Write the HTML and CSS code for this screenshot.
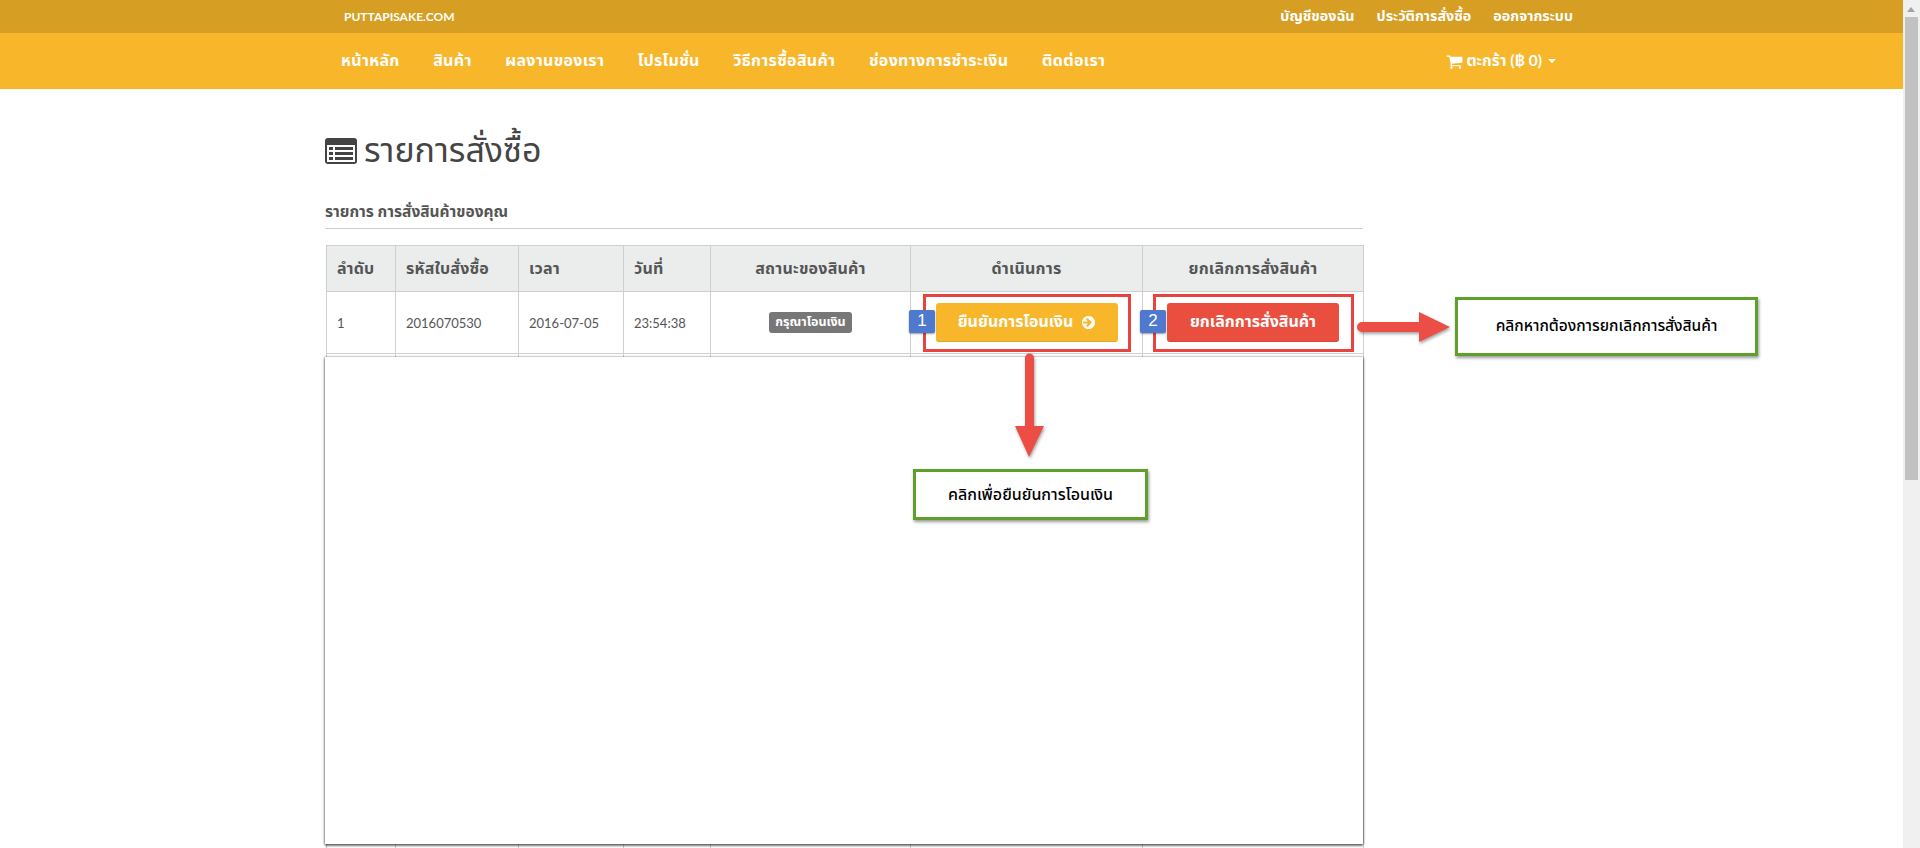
FILE: index.html
```html
<!DOCTYPE html>
<html lang="th">
<head>
  <meta charset="UTF-8" />
  <title>รายการสั่งซื้อ</title>
  <link rel="stylesheet" href="styles.css">
</head>
<body>
  <div class="page">
    <div class="main">
      <div class="topbar">
        <div class="brand">PUTTAPISAKE.COM</div>
        <ul class="toplinks">
          <li>บัญชีของฉัน</li>
          <li>ประวัติการสั่งซื้อ</li>
          <li>ออกจากระบบ</li>
        </ul>
      </div>

      <div class="navbar">
        <ul class="navlinks">
          <li>หน้าหลัก</li>
          <li>สินค้า</li>
          <li>ผลงานของเรา</li>
          <li>โปรโมชั่น</li>
          <li>วิธีการซื้อสินค้า</li>
          <li>ช่องทางการชำระเงิน</li>
          <li>ติดต่อเรา</li>
        </ul>
        <div class="cart">
          <svg class="cart-icon" viewBox="0 0 1792 1792"><path fill="#fff" d="M704 1536q0 52-38 90t-90 38-90-38-38-90 38-90 90-38 90 38 38 90zm896 0q0 52-38 90t-90 38-90-38-38-90 38-90 90-38 90 38 38 90zm128-1088v512q0 24-16.5 42.5t-40.5 21.5l-1044 122q13 60 13 70 0 16-24 64h920q26 0 45 19t19 45-19 45-45 19h-1024q-26 0-45-19t-19-45q0-11 8-31.5t16-36 21.5-40 15.5-29.5l-177-823h-204q-26 0-45-19t-19-45 19-45 45-19h256q16 0 28.5 6.5t19.5 15.5 13 24.5 8 26 5.5 29.5 4.5 26h1201q26 0 45 19t19 45z"/></svg>
          <span>ตะกร้า (฿ 0)</span>
          <span class="caret"></span>
        </div>
      </div>

      <div class="content">
        <h1 class="title">
          <svg class="title-icon" viewBox="0 0 32 26">
            <rect x="0" y="0" width="32" height="26" rx="3" fill="#444"/>
            <rect x="2" y="7" width="28" height="17" fill="#fff"/>
            <path fill="#444" d="M4 9h4v3h-4zM10 9h18v3h-18zM4 14h4v3h-4zM10 14h18v3h-18zM4 19h4v3h-4zM10 19h18v3h-18z"/>
          </svg>
          รายการสั่งซื้อ
        </h1>
        <h2 class="section">รายการ การสั่งสินค้าของคุณ</h2>

        <table class="orders">
          <thead>
            <tr>
              <th class="col-no">ลำดับ</th>
              <th class="col-code">รหัสใบสั่งซื้อ</th>
              <th class="col-time">เวลา</th>
              <th class="col-date">วันที่</th>
              <th class="col-status center">สถานะของสินค้า</th>
              <th class="col-action center">ดำเนินการ</th>
              <th class="center">ยกเลิกการสั่งสินค้า</th>
            </tr>
          </thead>
          <tbody>
            <tr class="row-first">
              <td>1</td>
              <td>2016070530</td>
              <td>2016-07-05</td>
              <td>23:54:38</td>
              <td class="center"><span class="label">กรุณาโอนเงิน</span></td>
              <td class="center">
                <span class="btn btn-yellow">ยืนยันการโอนเงิน
                  <svg class="btn-icon" viewBox="128 128 1536 1536"><path fill="#fff" d="M1285 896q0-27-18-45l-91-91-362-362q-18-18-45-18t-45 18l-91 91q-18 18-18 45t18 45l189 189h-502q-26 0-45 19t-19 45v128q0 26 19 45t45 19h502l-189 189q-19 19-19 45t19 45l91 91q18 18 45 18t45-18l362-362 91-91q18-18 18-45zm379 0q0 209-103 385.500t-279.500 279.500-385.500 103-385.500-103-279.500-279.500-103-385.500 103-385.500 279.500-279.500 385.500-103 385.500 103 279.500 279.500 103 385.500z"/></svg>
                </span>
              </td>
              <td class="center"><span class="btn btn-red">ยกเลิกการสั่งสินค้า</span></td>
            </tr>
            <tr class="row-hidden">
              <td></td><td></td><td></td><td></td><td></td><td></td><td></td>
            </tr>
          </tbody>
        </table>
      </div>
    </div>

    <div class="scrollbar">
      <div class="scroll-up"></div>
      <div class="scroll-thumb"></div>
    </div>
  </div>

  <!-- annotations pasted on top of the screenshot -->
  <div class="paste"></div>
  <div class="mark mark-1"></div>
  <div class="mark mark-2"></div>
  <div class="num num-1">1</div>
  <div class="num num-2">2</div>

  <svg class="arrows" viewBox="0 0 1920 848">
    <g fill="#ec4e46" class="arrow-shapes">
      <path d="M1362 322H1419V312L1450 327L1419 342V332H1362a5 5 0 0 1 0-10z"/>
      <path d="M1025 358a4.500 4.500 0 0 1 9 0V426H1044L1029 457L1015 426H1025z"/>
    </g>
  </svg>

  <div class="note note-cancel">คลิกหากต้องการยกเลิกการสั่งสินค้า</div>
  <div class="note note-confirm">คลิกเพื่อยืนยันการโอนเงิน</div>
</body>
</html>
```

FILE: styles.css
```css
* {
  box-sizing: border-box;
}

html, body {
  margin: 0;
  height: 848px;
  overflow: hidden;
}

body {
  background-color: #fff;
  color: #34495e;
  font-family: 'Lato', 'Noto Sans Thai', 'Noto Sans', 'DejaVu Sans', sans-serif;
  font-size: 14px;
  position: relative;
}

ul {
  list-style: none;
  margin: 0;
  padding: 0;
}

.page {
  display: flex;
  height: 848px;
}

.main {
  flex: 1;
  min-width: 0;
}

/* top bars */
.topbar {
  height: 33px;
  background-color: #d69e22;
  color: #fff;
  display: flex;
  align-items: center;
  padding: 0 330px 0 344px;
  font-size: 14.3px;
  font-weight: 700;
}

.brand {
  flex: 1;
  font-size: 12px;
}

.toplinks {
  display: flex;
  gap: 22px;
}

.navbar {
  height: 56px;
  background-color: #f8b62b;
  color: #fff;
  display: flex;
  align-items: center;
  justify-content: space-between;
  padding: 0 347px 0 341px;
  font-size: 16px;
  letter-spacing: 0.3px;
  font-weight: 700;
}

.navlinks {
  display: flex;
  gap: 33.6px;
}

.cart {
  display: flex;
  align-items: center;
  gap: 3px;
  letter-spacing: 0;
  font-size: 15.5px;
}

.cart-icon {
  width: 17px;
  height: 17px;
}

.caret {
  margin-left: 3px;
  border-top: 4px solid #fff;
  border-left: 4px solid transparent;
  border-right: 4px solid transparent;
}

/* content */
.content {
  padding: 0 0 0 325px;
  width: 1363px;
}

.title {
  display: flex;
  align-items: center;
  gap: 7px;
  margin: 0;
  padding-top: 20px;
  height: 104px;
  font-size: 34px;
  font-weight: 400;
  color: #444;
}

.title-icon {
  width: 32px;
  height: 26px;
}

.section {
  margin: 0 0 16px;
  height: 36px;
  padding: 8px 0 0;
  border-bottom: 1px solid #ccc;
  font-size: 15.5px;
  font-weight: 700;
  color: #555;
}

.orders {
  width: 1038px;
  margin-left: 1px;
  border-collapse: collapse;
  table-layout: fixed;
  color: #555;
  font-size: 13px;
}

.orders th, .orders td {
  border: 1px solid #cfcfcf;
  padding: 0 10px;
  text-align: left;
}

.orders th {
  height: 46px;
  background-color: #ebeded;
  font-size: 16px;
  letter-spacing: 0.2px;
  font-weight: 700;
}

.orders .center {
  text-align: center;
}

.col-no { width: 69px; }
.col-code { width: 123px; }
.col-time { width: 105px; }
.col-date { width: 87px; }
.col-status { width: 200px; }
.col-action { width: 232px; }

.row-first td {
  height: 62px;
}

.row-hidden td {
  height: 600px;
}

.label {
  display: inline-block;
  padding: 1px 6px;
  border-radius: 3px;
  background-color: #777;
  color: #fff;
  font-size: 12.5px;
  font-weight: 700;
}

.btn {
  display: inline-flex;
  align-items: center;
  justify-content: center;
  gap: 9px;
  height: 39px;
  border-radius: 3px;
  color: #fff;
  font-size: 16px;
  font-weight: 700;
}

.btn-yellow {
  width: 182px;
  background-color: #f8b62b;
  border-bottom: 1px solid #e5a824;
}

.btn-red {
  width: 172px;
  background-color: #e94e3e;
  border-bottom: 1px solid #d9463a;
}

.btn-icon {
  width: 13px;
  height: 13px;
}

/* fake scrollbar */
.scrollbar {
  width: 17px;
  height: 848px;
  background-color: #f0f0f0;
  padding: 0 2px;
  position: relative;
}

.scroll-up {
  height: 17px;
  width: 13px;
  position: relative;
}

.scroll-up::before {
  content: "";
  position: absolute;
  left: 2px;
  top: 7px;
  border-bottom: 5px solid #a3a3a3;
  border-left: 4px solid transparent;
  border-right: 4px solid transparent;
}

.scroll-thumb {
  height: 463px;
  background-color: #c1c1c1;
}

/* annotations */
.paste {
  position: absolute;
  left: 325px;
  top: 357px;
  width: 1038px;
  height: 487px;
  background-color: #fff;
  box-shadow: 0 2px 2px rgba(0, 0, 0, 0.5), -1px 0 2px rgba(0, 0, 0, 0.3), 1px 0 2px rgba(0, 0, 0, 0.3);
}

.mark {
  position: absolute;
  top: 294px;
  height: 58px;
  border: 3px solid #e9433f;
}

.mark-1 {
  left: 923px;
  width: 208px;
}

.mark-2 {
  left: 1153px;
  width: 201px;
}

.num {
  position: absolute;
  top: 310px;
  width: 26px;
  height: 23px;
  border-radius: 2px;
  background-color: #4f78cf;
  box-shadow: 0 1px 2px rgba(0, 0, 0, 0.4);
  color: #fff;
  font-family: 'Liberation Sans', sans-serif;
  font-size: 17px;
  line-height: 21px;
  text-align: center;
}

.num-1 { left: 909px; }
.num-2 { left: 1140px; }

.arrows {
  position: absolute;
  left: 0;
  top: 0;
  width: 1920px;
  height: 848px;
  pointer-events: none;
}

.arrow-shapes {
  filter: drop-shadow(1px 2px 1.5px rgba(0, 0, 0, 0.35));
}

.note {
  position: absolute;
  display: flex;
  align-items: center;
  justify-content: center;
  background-color: #fff;
  border: 3px solid #5fa02b;
  box-shadow: 1px 2px 3px rgba(0, 0, 0, 0.4);
  color: #000;
  font-weight: 500;
}

.note-cancel {
  left: 1455px;
  top: 297px;
  width: 303px;
  height: 59px;
  font-size: 15.5px;
}

.note-confirm {
  left: 913px;
  top: 469px;
  width: 235px;
  height: 51px;
  font-size: 16px;
}
```
